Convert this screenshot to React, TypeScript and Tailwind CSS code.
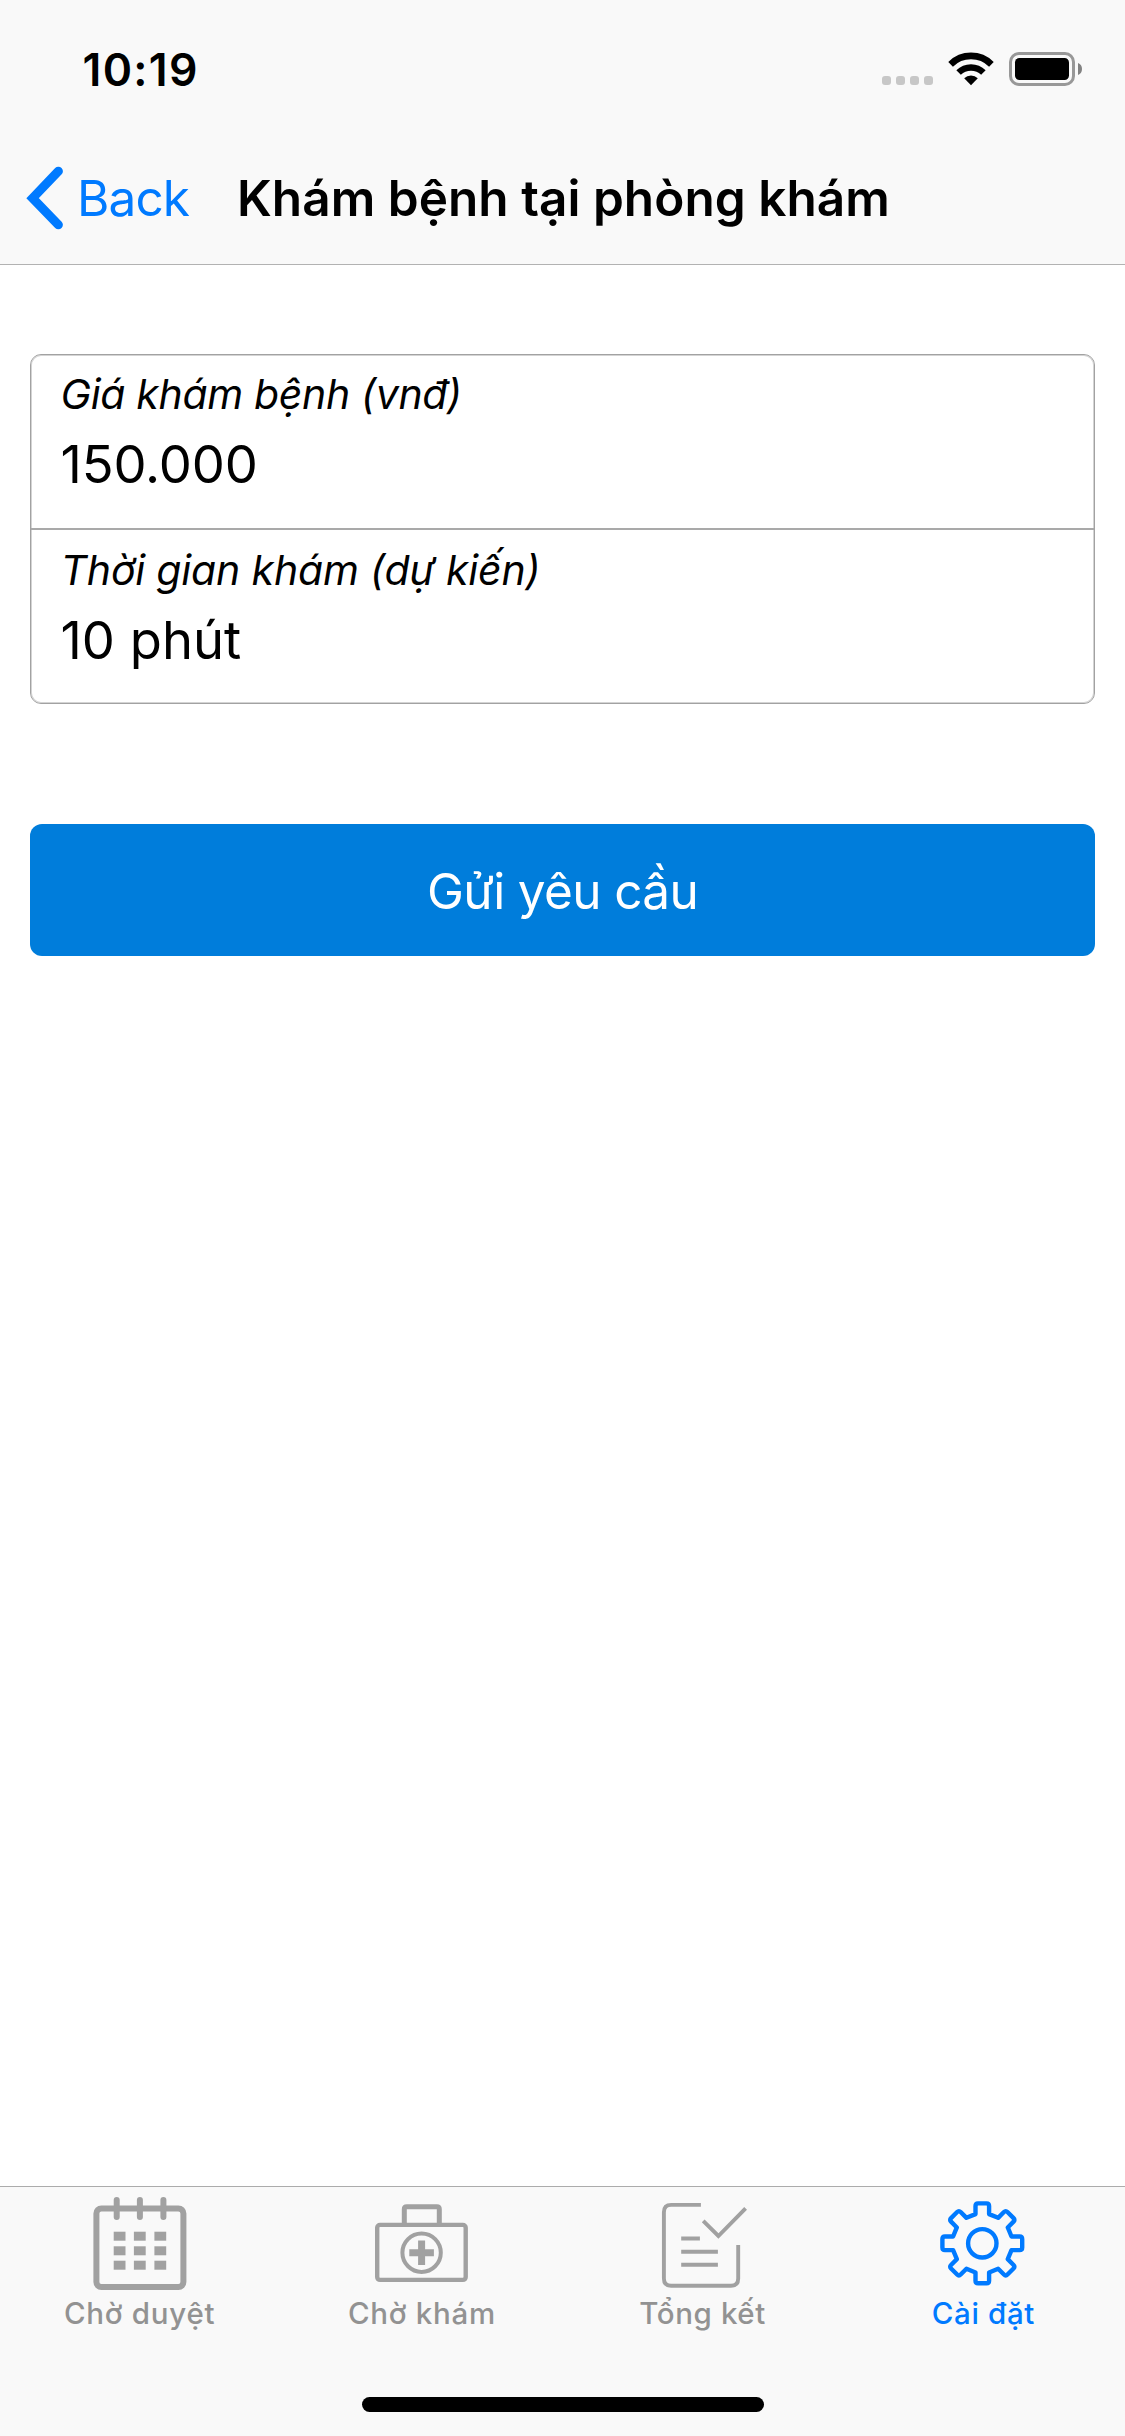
import React, { ReactNode } from "react";

function SignalDots() {
  return (
    <div className="mt-[23px] flex gap-[5px]">
      {[0, 1, 2, 3].map((i) => (
        <span key={i} className="size-[9px] rounded-[3px] bg-[#c7c7c7]" />
      ))}
    </div>
  );
}

function WifiIcon() {
  return (
    <svg className="ml-[15px] h-[34px] w-[46px]" viewBox="0 0 46 34" fill="none">
      <path d="M2.6 12.3a29 29 0 0 1 40.8 0" stroke="#000" strokeWidth="6.6" />
      <path d="M10.6 20.6a17.6 17.6 0 0 1 24.8 0" stroke="#000" strokeWidth="6.4" />
      <path d="M16.2 26.2a9.8 9.8 0 0 1 13.6 0L23 33.2z" fill="#000" />
    </svg>
  );
}

function BatteryIcon() {
  return (
    <svg className="ml-[15px] h-[34px] w-[74px]" viewBox="0 0 74 34" fill="none">
      <rect x="1.5" y="1.5" width="63" height="31" rx="8.5" stroke="#989898" strokeWidth="3" />
      <rect x="6" y="6" width="54" height="22" rx="4.5" fill="#000" />
      <path d="M69 11c2.6 1 4 3.3 4 6s-1.4 5-4 6z" fill="#828282" />
    </svg>
  );
}

function ChevronLeft() {
  return (
    <svg className="ml-[26px] h-[66px] w-[38px]" viewBox="0 0 38 66" fill="none">
      <path d="M32.4 6.2L6.6 33.2l25.8 26.6" stroke="#007aff" strokeWidth="9" strokeLinecap="round" />
    </svg>
  );
}

function CalendarIcon() {
  return (
    <svg className="size-[96px]" viewBox="0 0 96 96" fill="none" stroke="currentColor">
      <rect x="3.4" y="12.5" width="87" height="78.5" rx="5" strokeWidth="6" />
      <path d="M23.7 4v17M46.9 4v17M70.4 4v17" strokeWidth="6" strokeLinecap="round" />
      {[35.7, 50.3, 64.7].map((y) =>
        [20.7, 40.9, 61.4].map((x) => (
          <rect key={`${x}-${y}`} x={x} y={y} width="11.8" height="9" fill="currentColor" stroke="none" />
        )),
      )}
    </svg>
  );
}

function MedkitIcon() {
  return (
    <svg className="size-[96px]" viewBox="0 0 96 96" fill="none" stroke="currentColor">
      <rect x="3.2" y="28.9" width="88.5" height="55" rx="2.8" strokeWidth="4.4" />
      <path d="M30.3 28V13.3q0-2.5 2.5-2.5h30q2.5 0 2.5 2.5V28" strokeWidth="5" />
      <circle cx="47.6" cy="56.7" r="19.2" strokeWidth="4" />
      <path d="M47.6 44.5v24.4M35.3 56.7h24.6" strokeWidth="7" />
    </svg>
  );
}

function ReportIcon() {
  return (
    <svg className="size-[96px]" viewBox="0 0 96 96" fill="none" stroke="currentColor" strokeWidth="3.9">
      <path d="M45.9 8.9H16.2q-7.3 0-7.3 7.3v66.2q0 7.3 7.3 7.3h59.7q7.3 0 7.3-7.3V49" />
      <path d="M48.2 24.9L63.4 40 90.6 12.3" />
      <path d="M26.2 42.5h18.7M26.2 55.8h36.7M26.2 68.8h36.7" />
    </svg>
  );
}

const rotate = (x: number, y: number, deg: number) => {
  const a = (deg * Math.PI) / 180;
  const rx = x * Math.cos(a) - y * Math.sin(a);
  const ry = x * Math.sin(a) + y * Math.cos(a);
  return `${rx.toFixed(2)} ${ry.toFixed(2)}`;
};

// One rounded tooth, repeated every 45 degrees.
const gearPath =
  Array.from({ length: 8 }, (_, i) => {
    const p = (x: number, y: number) => rotate(x, y, i * 45);
    return `${i === 0 ? "M" : "L"}${p(-6.8, -29.2)}L${p(-6.8, -37.4)}Q${p(-6.8, -39.9)} ${p(-4.3, -39.9)}L${p(4.3, -39.9)}Q${p(6.8, -39.9)} ${p(6.8, -37.4)}L${p(6.8, -29.2)}`;
  }).join("") + "Z";

function GearIcon() {
  return (
    <svg className="size-[96px]" viewBox="-46.3 -47.3 96 96" fill="none" stroke="currentColor" strokeWidth="4.4">
      <path d={gearPath} strokeLinejoin="round" />
      <circle r="14.2" />
    </svg>
  );
}

function Tab({ icon, label, active, spacing }: { icon: ReactNode; label: string; active?: boolean; spacing: string }) {
  return (
    <a className="flex flex-1 flex-col items-center pt-[9px]">
      <span className={active ? "text-[#007aff]" : "text-[#a1a1a1]"}>{icon}</span>
      <span
        className={`mt-[3px] text-[29.5px] leading-[36px] font-medium ${spacing} ${active ? "text-[#007aff]" : "text-[#929292]"}`}
      >
        {label}
      </span>
    </a>
  );
}

export default function App() {
  return (
    <div className="flex h-[2436px] w-[1125px] flex-col bg-white font-['Inter',sans-serif] text-black">
      <header className="border-b border-[#b2b2b2] bg-[#f9f9f9]">
        <div className="flex h-[132px] items-center justify-between pt-[6px] pr-[42px] pl-[82.5px]">
          <span className="mt-px text-[44.5px] leading-[54px] font-semibold tracking-[1.33px]">10:19</span>
          <div className="flex items-center">
            <SignalDots />
            <WifiIcon />
            <BatteryIcon />
          </div>
        </div>
        <div className="flex h-[132px] items-center text-[49.5px] leading-[60px]">
          <a className="flex w-[237px] items-center text-[#007aff]">
            <ChevronLeft />
            <span className="ml-[13px] tracking-[-0.9px]">Back</span>
          </a>
          <h1 className="font-semibold tracking-[0.04px] whitespace-nowrap">Khám bệnh tại phòng khám</h1>
        </div>
      </header>

      <main className="flex-1 px-[30px] pt-[89px]">
        <section className="h-[350px] rounded-[11px] border border-[#a2a2a2] shadow-[inset_0_0_0_1px_#d4d4d4]">
          <div className="h-[173px] pt-[14px] pl-[29.5px]">
            <p className="text-[41px] leading-[50px] tracking-[-0.34px] italic">Giá khám bệnh (vnđ)</p>
            <p className="mt-[13px] text-[52.5px] leading-[64px] tracking-[-0.15px]">150.000</p>
          </div>
          <div className="h-[175px] border-t-2 border-[#a9a9a9] pt-[15px] pl-[29.5px]">
            <p className="text-[41px] leading-[50px] tracking-[-0.17px] italic">Thời gian khám (dự kiến)</p>
            <p className="mt-[13px] text-[52.5px] leading-[64px]">10 phút</p>
          </div>
        </section>
        <button className="mt-[120px] block h-[132px] w-full rounded-[12px] bg-[#007ddb] pt-[2px] text-[49.5px] leading-[60px] font-normal tracking-[-0.65px] text-white">
          Gửi yêu cầu
        </button>
      </main>

      <footer className="flex h-[250px] flex-col justify-between border-t border-[#acacac] bg-[#f9f9f9] pb-[24px]">
        <nav className="flex">
          <Tab icon={<CalendarIcon />} label="Chờ duyệt" spacing="pr-[2px] tracking-[0.72px]" />
          <Tab icon={<MedkitIcon />} label="Chờ khám" spacing="tracking-[0.72px]" />
          <Tab icon={<ReportIcon />} label="Tổng kết" spacing="pr-[1px] tracking-[0.6px]" />
          <Tab icon={<GearIcon />} label="Cài đặt" spacing="pr-[2px] tracking-[0.64px]" active />
        </nav>
        <div className="ml-[362px] h-[15px] w-[402px] rounded-full bg-black" />
      </footer>
    </div>
  );
}
